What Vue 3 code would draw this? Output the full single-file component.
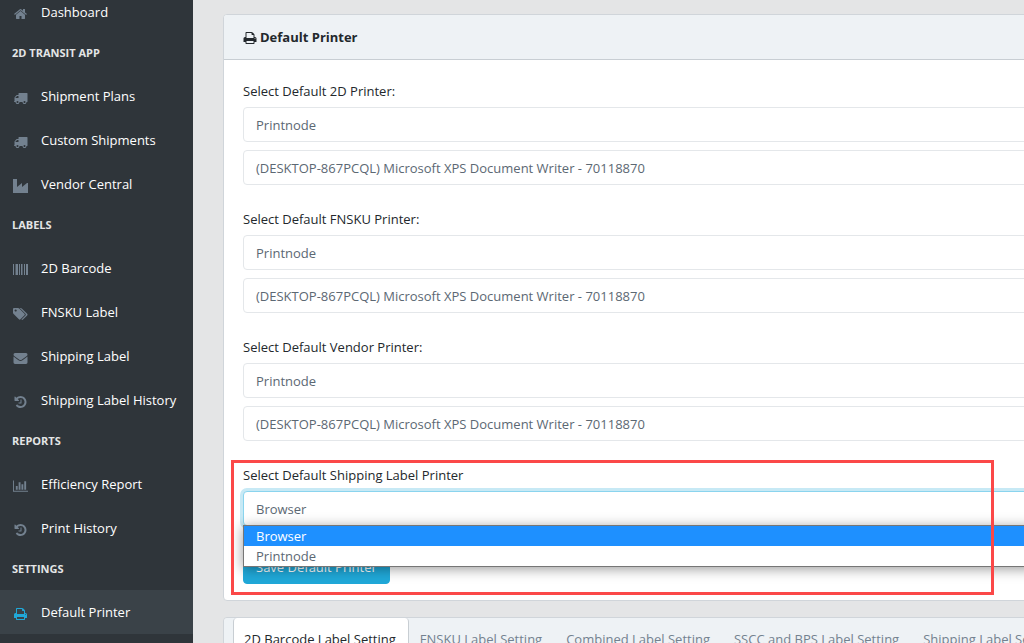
<script setup>
import { ref } from 'vue'

const icons = {
  home: { box: '0 0 1792 1792', d: 'M1472 992v480q0 26-19 45t-45 19h-384v-384h-256v384h-384q-26 0-45-19t-19-45v-480q0-1 .5-3t.5-3l575-474 575 474q1 2 1 6zm223-69l-62 74q-8 9-21 11h-3q-13 0-21-7l-692-577-692 577q-12 8-24 7-13-2-21-11l-62-74q-8-10-7-23.5t11-21.5l719-599q32-26 76-26t76 26l244 204v-195q0-14 9-23t23-9h192q14 0 23 9t9 23v408l219 182q10 8 11 21.5t-7 23.5z' },
  truck: { box: '0 0 1792 1792', d: 'M640 1408q0-52-38-90t-90-38-90 38-38 90 38 90 90 38 90-38 38-90zm-384-512h384v-256h-158q-13 0-22 9l-195 195q-9 9-9 22v30zm1280 512q0-52-38-90t-90-38-90 38-38 90 38 90 90 38 90-38 38-90zm256-1088v1024q0 15-4 26.5t-13.5 18.5-16.5 11.5-23.5 6-22.5 2-25.5 0-22.5-.5q0 106-75 181t-181 75-181-75-75-181h-384q0 106-75 181t-181 75-181-75-75-181h-64q-3 0-22.5.5t-25.5 0-22.5-2-23.5-6-16.5-11.5-13.5-18.5-4-26.5q0-26 19-45t45-19v-320q0-8-.5-35t0-38 2.5-34.5 6.5-37 14-30.5 22.5-30l198-198q19-19 50.5-32t58.5-13h160v-192q0-26 19-45t45-19h1024q26 0 45 19t19 45z' },
  industry: { box: '0 0 15 14', d: 'M0 0h4v8l5-4v4l5-4h1v10H0z' },
  barcode: { box: '0 0 15 14', d: 'M0 1h1v11H0zM2 1h.5v11H2zM3 1h2v11H3zM6 1h1v11H6zM8 1h1v11H8zM9.500 1h.5v11h-.5zM11 1h1v11h-1zM13 1h2v11h-2z' },
  tags: { box: '0 0 15 14', d: 'M0 2Q0 1 1 1h4q.8 0 1.500.7l5 5q.8.8 0 1.600l-4 4q-.8.8-1.600 0l-5-5Q0 6.500 0 6zM2.600 2.400a1.100 1.100 0 1 0 .1 0zM6.700 1h.8q.9 0 1.500.7l5.200 5.100q.8.8 0 1.600l-4.200 4.100q-.9.800-1.600-.1l4-3.900q.8-.8 0-1.700z' },
  envelope: { box: '0 0 14 14', d: 'M0 3.500Q0 2 1.500 2h11Q14 2 14 3.500q0 1-1 1.800L8.500 8.400Q7 9.400 5.500 8.400L1 5.300Q0 4.500 0 3.500zM0 5.600l5 3.600q2 1.400 4 0l5-3.600v6q0 1.400-1.500 1.400h-11Q0 13 0 11.600z' },
  history: { box: '0 0 1792 1792', d: 'M1664 896q0 156-61 298t-164 245-245 164-298 61q-172 0-327-72.5t-264-204.500q-7-10-6.500-22.500t8.500-20.500l137-138q10-9 25-9 16 2 23 12 73 95 179 147t225 52q104 0 198.500-40.500t163.500-109.500 109.500-163.500 40.500-198.500-40.500-198.500-109.500-163.500-163.500-109.500-198.500-40.500q-98 0-188 35.500t-160 101.500l137 138q31 30 14 69-17 40-59 40h-448q-26 0-45-19t-19-45v-448q0-42 40-59 39-17 69 14l130 129q107-101 244.500-156.500t284.500-55.500q156 0 298 61t245 164 164 245 61 298zm-640-288v448q0 14-9 23t-23 9h-320q-14 0-23-9t-9-23v-64q0-14 9-23t23-9h224v-352q0-14 9-23t23-9h64q14 0 23 9t9 23z' },
  chart: { box: '0 0 2048 1792', d: 'M640 896v512h-256v-512h256zm384-512v1024h-256v-1024h256zm1024 1152v128h-2048v-1536h128v1408h1920zm-640-896v768h-256v-768h256zm384-384v1152h-256v-1152h256z' },
  print: { box: '0 0 1792 1792', d: 'M448 1536h896v-256h-896v256zm0-640h896v-384h-160q-40 0-68-28t-28-68v-160h-640v640zm1152 64q0-26-19-45t-45-19-45 19-19 45 19 45 45 19 45-19 19-45zm128 0v416q0 13-9.500 22.500t-22.500 9.500h-224v160q0 40-28 68t-68 28h-960q-40 0-68-28t-28-68v-160h-224q-13 0-22.500-9.500t-9.500-22.500v-416q0-79 56.500-135.500t135.500-56.500h64v-544q0-40 28-68t68-28h672q40 0 88 20t76 48l152 152q28 28 48 76t20 88v256h64q79 0 135.500 56.500t56.500 135.500z' }
}

const nav = [
  { text: 'Dashboard', icon: 'home' },
  { title: '2D TRANSIT APP' },
  { text: 'Shipment Plans', icon: 'truck' },
  { text: 'Custom Shipments', icon: 'truck' },
  { text: 'Vendor Central', icon: 'industry' },
  { title: 'LABELS' },
  { text: '2D Barcode', icon: 'barcode' },
  { text: 'FNSKU Label', icon: 'tags' },
  { text: 'Shipping Label', icon: 'envelope' },
  { text: 'Shipping Label History', icon: 'history' },
  { title: 'REPORTS' },
  { text: 'Efficiency Report', icon: 'chart' },
  { text: 'Print History', icon: 'history' },
  { title: 'SETTINGS' },
  { text: 'Default Printer', icon: 'print', active: true }
]

const device = '(DESKTOP-867PCQL) Microsoft XPS Document Writer - 70118870'
const groups = [
  { id: 'printer-2d', label: 'Select Default 2D Printer:' },
  { id: 'printer-fnsku', label: 'Select Default FNSKU Printer:' },
  { id: 'printer-vendor', label: 'Select Default Vendor Printer:' }
]
const sources = ['Browser', 'Printnode']
const shipping = ref('Browser')

const tabs = ['2D Barcode Label Setting', 'FNSKU Label Setting', 'Combined Label Setting', 'SSCC and BPS Label Setting', 'Shipping Label Setting']
const activeTab = ref(0)
</script>

<template>
  <div class="app">
    <aside class="sidebar">
      <nav>
        <ul class="nav">
          <li v-for="(item, i) in nav" :key="i">
            <span v-if="item.title" class="nav-title">{{ item.title }}</span>
            <a v-else href="#" class="nav-link" :class="{ active: item.active }">
              <svg class="nav-icon" :viewBox="icons[item.icon].box" aria-hidden="true"><path fill-rule="evenodd" :d="icons[item.icon].d" /></svg>
              <span>{{ item.text }}</span>
            </a>
          </li>
        </ul>
      </nav>
    </aside>

    <main class="main">
      <section class="card">
        <header class="card-header">
          <svg class="head-icon" :viewBox="icons.print.box" aria-hidden="true"><path :d="icons.print.d" /></svg>
          <strong>Default Printer</strong>
        </header>
        <form class="card-body" @submit.prevent>
          <div v-for="g in groups" :key="g.id" class="group">
            <label :for="g.id">{{ g.label }}</label>
            <select :id="g.id" class="control">
              <option>Printnode</option>
              <option>Browser</option>
            </select>
            <select class="control" :aria-label="g.label + ' device'">
              <option>{{ device }}</option>
            </select>
          </div>

          <div class="group shipping">
            <label for="printer-shipping">Select Default Shipping Label Printer</label>
            <div class="picker">
              <select id="printer-shipping" v-model="shipping" class="control focused">
                <option v-for="s in sources" :key="s">{{ s }}</option>
              </select>
              <ul class="menu" role="listbox" aria-label="Printer source">
                <li v-for="s in sources" :key="s" role="option" :aria-selected="s === shipping" :class="{ chosen: s === shipping }" @click="shipping = s">{{ s }}</li>
              </ul>
            </div>
            <button type="submit" class="save">Save Default Printer</button>
            <div class="highlight"></div>
          </div>
        </form>
      </section>

      <section class="card tabs-card">
        <div class="tabs" role="tablist">
          <button v-for="(t, i) in tabs" :key="t" type="button" role="tab" class="tab" :class="{ active: i === activeTab }" :aria-selected="i === activeTab" @click="activeTab = i">{{ t }}</button>
        </div>
      </section>
    </main>
  </div>
</template>

<style>
body {
  margin: 0;
  overflow: hidden;
}
</style>

<style scoped>
* {
  box-sizing: border-box;
}

.app {
  display: flex;
  height: 100vh;
  overflow: hidden;
  background: #e4e5e6;
  color: #23282c;
  font: 13px/21px "Open Sans", "Noto Sans", sans-serif;
}

.sidebar {
  flex: 0 0 193px;
  background: #2f353a;
  overflow: hidden;
}

.nav {
  list-style: none;
  margin: -10px 0 0;
  padding: 0;
}

.nav-title {
  display: flex;
  align-items: center;
  height: 40px;
  padding: 0 0 3px 12px;
  color: #e4e5e6;
  font-size: 11px;
  font-weight: 700;
}

.nav-link {
  display: flex;
  align-items: center;
  gap: 13px;
  height: 44px;
  padding-left: 13px;
  color: #fff;
  text-decoration: none;
  white-space: nowrap;
}

.nav-link.active {
  background: #3a4248;
}

.nav-icon {
  width: 15px;
  height: 14px;
  margin-top: 4px;
  fill: #73818f;
}

.active .nav-icon {
  fill: #20a8d8;
}

.main {
  flex: 1;
  min-width: 0;
  overflow: hidden;
  padding: 14px 0 0 30px;
}

.card {
  margin-right: -30px;
  margin-bottom: 16px;
  background: #fff;
  border: 1px solid #d0d5da;
  border-radius: 4px;
}

.card-header {
  display: flex;
  align-items: center;
  gap: 3px;
  padding: 12px 19px 11px;
  background: #eef2f5;
  border-bottom: 1px solid #c8ced3;
  border-radius: 3px 3px 0 0;
}

.head-icon {
  width: 14px;
  height: 14px;
  fill: #23282c;
}

.card-body {
  padding: 21px 19px 16px;
}

.group {
  display: flex;
  flex-direction: column;
  gap: 8px;
  margin-bottom: 24px;
}

.group label {
  margin-bottom: -3px;
}

.control {
  display: block;
  width: 100%;
  height: 35px;
  padding: 1px 12px 0;
  appearance: none;
  background: #fff;
  border: 1px solid #e4e7ea;
  border-radius: 4px;
  color: #5c6873;
  font: inherit;
  outline: none;
}

.control.focused {
  border-color: #8ad4ee;
  box-shadow: 0 0 0 3px #c7e9f5;
}

.shipping {
  position: relative;
  align-items: flex-start;
  margin-bottom: 0;
}

.picker {
  position: relative;
  width: 100%;
}

.menu {
  position: absolute;
  top: 34px;
  left: 0;
  right: 0;
  z-index: 1;
  margin: 0;
  padding: 0;
  list-style: none;
  background: #fff;
  border: 1px solid #767676;
  box-shadow: 0 2px 12px rgba(0, 0, 0, 0.4);
  color: #5c6873;
  line-height: 20px;
}

.menu li {
  padding: 0 12px;
}

.menu .chosen {
  background: #1e90ff;
  color: #fff;
}

.save {
  height: 34px;
  margin-top: 16px;
  padding: 0 12px;
  background: #20a8d8;
  border: 1px solid #20a8d8;
  border-radius: 4px;
  color: #fff;
  font: inherit;
}

.highlight {
  position: absolute;
  inset: -5px 40px -11px -12px;
  z-index: 2;
  border: 3px solid #fb4848;
  pointer-events: none;
}

.tabs-card {
  overflow: hidden;
}

.tabs {
  display: flex;
  padding: 0 9px;
  background: #eef2f5;
  border-bottom: 1px solid #c8ced3;
}

.tab {
  flex: none;
  height: 44px;
  padding: 0 12px 0 10px;
  background: transparent;
  border: 1px solid transparent;
  border-top: 0;
  color: #73818f;
  font: inherit;
  white-space: nowrap;
}

.tab.active {
  background: #fff;
  border-color: #c8ced3;
  border-radius: 4px 4px 0 0;
  color: #23282c;
}
</style>
